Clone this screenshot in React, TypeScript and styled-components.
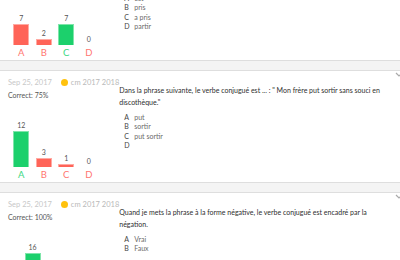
import React from "react";
import styled, { createGlobalStyle } from "styled-components";

type Card = {
	date: string;
	group: string;
	question: string;
	choices: string[];
	answers: number[];
	right: number;
};

const cards: Card[] = [
	{
		date: "Sep 25, 2017",
		group: "cm 2017 2018",
		question: "Dans la phrase « Il a pris le train », le verbe conjugué est :",
		choices: ["est", "pris", "a pris", "partir"],
		answers: [7, 2, 7, 0],
		right: 2,
	},
	{
		date: "Sep 25, 2017",
		group: "cm 2017 2018",
		question:
			"Dans la phrase suivante, le verbe conjugué est ... : \" Mon frère put sortir sans souci en discothèque.\"",
		choices: ["put", "sortir", "put sortir", ""],
		answers: [12, 3, 1, 0],
		right: 0,
	},
	{
		date: "Sep 25, 2017",
		group: "cm 2017 2018",
		question:
			"Quand je mets la phrase à la forme négative, le verbe conjugué est encadré par la négation.",
		choices: ["Vrai", "Faux"],
		answers: [16, 0],
		right: 0,
	},
];

const LETTERS = ["A", "B", "C", "D"];

const GlobalStyle = createGlobalStyle`
	html, body {
		margin: 0;
		padding: 0;
		background: #ffffff;
		overflow: hidden;
	}
	body {
		font-family: Lato, "Open Sans", sans-serif;
	}
`;

export default function App() {
	return (
		<>
			<GlobalStyle />
			<Feed>
				{cards.map((card, i) => {
					const total = card.answers.reduce((a, b) => a + b, 0);
					const pct = Math.round((card.answers[card.right] / total) * 100);
					return (
						<StyledCard key={i}>
							<Caret viewBox="0 0 8 6">
								<path d="M1 1l3 3 3-3" />
							</Caret>
							<Left>
								<Meta>
									<DateText>{card.date}</DateText>
									<Dot />
									<Group>{card.group}</Group>
								</Meta>
								<Correct>Correct: {pct}%</Correct>
								<Chart>
									{card.answers.map((n, j) => (
										<Column key={j}>
											<Count>{n}</Count>
											<Bar $good={j === card.right} $empty={n === 0} style={{ height: n * 3 }} />
											<Letter $good={j === card.right}>{LETTERS[j]}</Letter>
										</Column>
									))}
								</Chart>
							</Left>
							<Right>
								<Question>{card.question}</Question>
								<Choices>
									{card.choices.map((c, j) => (
										<Choice key={j}>
											<ChoiceLetter>{LETTERS[j]}</ChoiceLetter>
											<ChoiceText>{c}</ChoiceText>
										</Choice>
									))}
								</Choices>
							</Right>
						</StyledCard>
					);
				})}
			</Feed>
		</>
	);
}

const Feed = styled.div`
	display: flex;
	flex-direction: column;
	gap: 9px;
	margin-top: -37px;
	background: #f4f4f4;
`;

const StyledCard = styled.div`
	position: relative;
	display: flex;
	background: #ffffff;
	border-top: 1px solid #dedede;
	border-bottom: 1px solid #dedede;
	padding: 6px 0 2px 8px;
`;

const Caret = styled.svg`
	position: absolute;
	top: 1px;
	right: -3px;
	width: 8px;
	height: 6px;
	fill: none;
	stroke: #aaaaaa;
	stroke-width: 1.2;
`;

const Left = styled.div`
	flex: 0 0 101px;
	display: flex;
	flex-direction: column;
`;

const Meta = styled.div`
	display: flex;
	align-items: center;
	height: 10px;
	white-space: nowrap;
	font-size: 7.5px;
`;

const DateText = styled.span`
	color: #c8c8c8;
`;

const Dot = styled.span`
	width: 7px;
	height: 7px;
	border-radius: 50%;
	background: #ffc20e;
	margin: 0 3px 0 9px;
`;

const Group = styled.span`
	color: #b9b9b9;
`;

const Correct = styled.div`
	margin-top: 3px;
	font-size: 7px;
	line-height: 10px;
	color: #555555;
`;

const Chart = styled.div`
	display: flex;
	align-items: flex-end;
	width: 90px;
	margin: 21px 0 0 2px;
`;

const Column = styled.div`
	flex: 1;
	display: flex;
	flex-direction: column;
	align-items: center;
`;

const Count = styled.div`
	font-size: 7px;
	line-height: 8px;
	color: #555555;
	margin-bottom: 2px;
`;

const Bar = styled.div<{ $good: boolean; $empty: boolean }>`
	width: 16px;
	box-sizing: border-box;
	background: ${(p) => (p.$good ? "#1cd06c" : "#ff6458")};
	border: ${(p) => (p.$empty ? "none" : `1px solid ${p.$good ? "#7fe5aa" : "#ffaaa3"}`)};
	border-bottom: none;
`;

const Letter = styled.div<{ $good: boolean }>`
	margin-top: 3px;
	font-size: 9.5px;
	line-height: 10px;
	color: ${(p) => (p.$good ? "#3bd882" : "#ff7670")};
`;

const Right = styled.div`
	flex: 0 0 272px;
	padding-top: 7px;
`;

const Question = styled.div`
	font-size: 7px;
	line-height: 12px;
	color: #2e2e2e;
`;

const Choices = styled.div`
	margin-top: 4px;
	padding-left: 5px;
	display: flex;
	flex-direction: column;
`;

const Choice = styled.div`
	display: flex;
	height: 9.5px;
	align-items: center;
	font-size: 7px;
`;

const ChoiceLetter = styled.span`
	width: 10px;
	color: #444444;
`;

const ChoiceText = styled.span`
	color: #6a6a6a;
`;
